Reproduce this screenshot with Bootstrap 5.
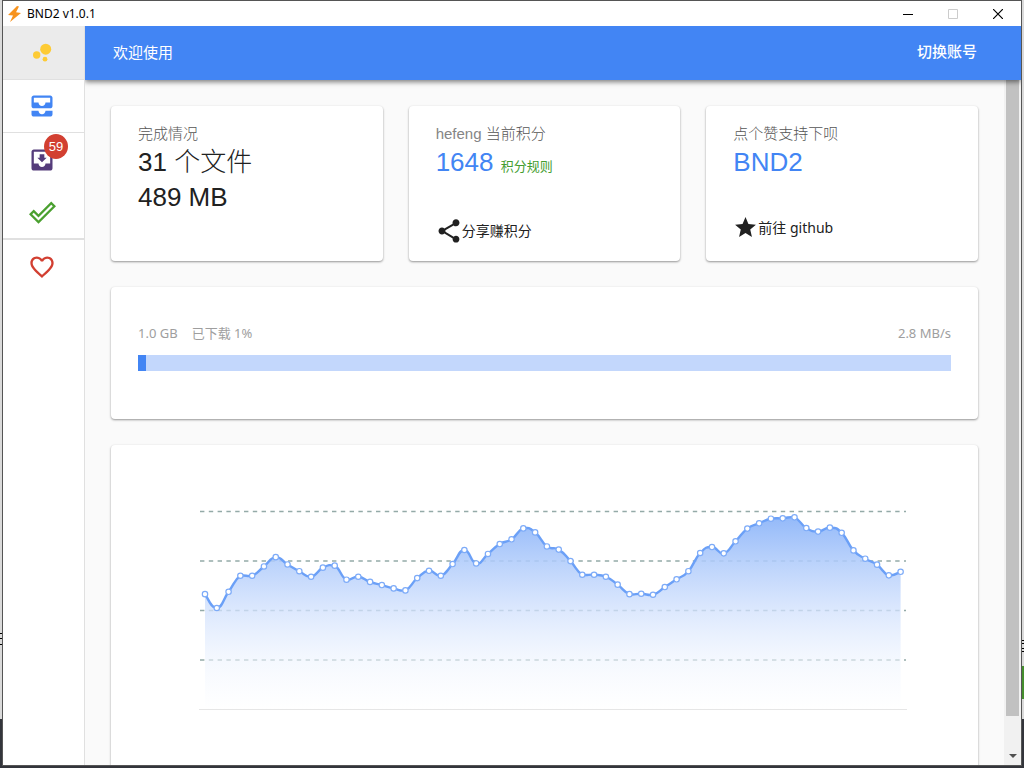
<!DOCTYPE html>
<html lang="zh-CN">
<head>
<meta charset="utf-8">
<meta name="viewport" content="width=device-width, initial-scale=1">
<title>BND2 v1.0.1</title>
<link rel="stylesheet" href="https://cdn.jsdelivr.net/npm/bootstrap@5.3.0/dist/css/bootstrap.min.css">
<style>
:root { --blue: #4285f4; --line: #e0e0e0; }
body {
  font-family: "Liberation Sans", "Noto Sans CJK SC", sans-serif;
  font-size: 15px; line-height: 21px; color: #212121;
  /* desktop behind the window: a sliver of other windows shows at both edges */
  background:
    linear-gradient(#448e2d, #448e2d) right 666px / 2px 33px no-repeat,
    linear-gradient(#000 1px, transparent 1px 5px, #000 5px 6px, transparent 6px 11px, #000 11px) left 633px / 2px 12px no-repeat,
    linear-gradient(#000 1px, transparent 1px 3px, #000 3px 4px, transparent 4px 8px, #000 8px 9px, transparent 9px 11px, #000 11px) right 640px / 2px 12px no-repeat,
    linear-gradient(#dadada 719px, #33353b 0);
}
svg { display: block; }
.app-window { height: calc(100vh - 2px); margin: 0 2px; border: 1px solid #555; background: #fff; }
.title-bar { height: 25px; padding-right: 1px; font: 12px/24px "Noto Sans", "Open Sans", sans-serif; color: #000; }
.title-bar .logo { margin: 0 5px 0 4px; }
.win-btn { width: 45px; height: 25px; }
.side-nav { width: 82px; border-right: 1px solid var(--line); }
.side-nav a { height: 53px; color: inherit; padding-right: 3px; }
.side-nav a.ruled { border-bottom: 1px solid var(--line); }
.side-nav a.group-end { height: 54px; border-bottom: 2px solid var(--line); }
.side-nav a.current { background: #ebebeb; height: 54px; }
.count { position: absolute; left: 41px; top: 1px; width: 24px; height: 25px; line-height: 25px; font-size: 13px; border-radius: 50%; background: #d23f31; color: #fff; text-align: center; }
.top-bar { height: 54px; padding: 0 44px 2px 28px; background: var(--blue); color: #fff; box-shadow: 0 2px 5px rgba(0,0,0,.5); z-index: 2; }
.top-bar button { font-size: 15px; font-weight: 500; color: #fff; }
.page-area { background: #fafafa; }
.scroll-view { padding: 26px; overflow-y: auto; scrollbar-width: none; }
.scroll-view::-webkit-scrollbar { display: none; }
.scroll-track { width: 17px; background: #f1f1f1; padding: 0 2px; }
.scroll-thumb { flex: 0 0 92.8%; background: #c1c1c1; }
.tiles { --bs-gutter-x: 26px; }
.panel { background: #fff; border-radius: 4px; padding: 0 27px; box-shadow: 0 1px 3px rgba(0,0,0,.16), 0 1px 2px rgba(0,0,0,.28); }
.tile { height: 155px; padding-top: 17px; }
.caption { color: #757575; }
.caption.cjk-thin { color: #555; }
.caption .latin { color: #858585; }
.figure-text { font-size: 26px; line-height: 35px; margin-top: 1px; }
.cjk-thin { font-weight: 300; }
.rules { font-size: 13px; color: #449d2f; }
.action { font: 14px/24px "Noto Sans", "Noto Sans CJK SC", sans-serif; color: #212121; }
.action.share { margin-bottom: 16px; }
.action.share svg { margin: 0 -1px 0 -1px; }
.action.star { margin-bottom: 21px; }
.text-blue { color: var(--blue); }
.download { margin-top: 26px; padding-top: 36px; padding-bottom: 48px; }
.stats { font: 13px/20px "Noto Sans", "Noto Sans CJK SC", sans-serif; color: #9e9e9e; margin-bottom: 12px; gap: 14px; }
.load-bar { height: 16px; border-radius: 0; background: #c3d7fc; }
.load-bar .progress-bar { background: var(--blue); }
.chart-card { margin-top: 26px; }
</style>
</head>
<body class="vh-100 overflow-hidden">
<div class="app-window d-flex flex-column">
  <header class="title-bar d-flex align-items-center flex-shrink-0">
    <svg class="logo" width="15" height="16" viewBox="0 0 15 16"><path fill="#f7931e" d="M10 0 1 9l5 .5L3 16l11-9-5-.8L12 .5z"/></svg>
    <span class="me-auto">BND2 v1.0.1</span>
    <button class="win-btn btn p-0 border-0 d-flex align-items-center justify-content-center" aria-label="最小化"><svg width="10" height="10"><path d="M0 5.500h10" stroke="#000"/></svg></button>
    <button class="win-btn btn p-0 border-0 d-flex align-items-center justify-content-center" aria-label="最大化"><svg width="10" height="10"><path d="M.5.5h9v9h-9z" fill="none" stroke="#ccc"/></svg></button>
    <button class="win-btn btn p-0 border-0 d-flex align-items-center justify-content-center" aria-label="关闭"><svg width="10" height="10"><path d="M0 0l10 10M10 0L0 10" stroke="#000" stroke-width="1.200"/></svg></button>
  </header>
  <div class="d-flex flex-grow-1 overflow-hidden">
    <nav class="side-nav flex-shrink-0">
      <a href="#home" class="current ruled d-flex align-items-center justify-content-center" aria-label="首页"><svg width="24" height="24" viewBox="0 0 24 24" fill="#fdcb35"><circle cx="6.700" cy="14" r="3.700"/><circle cx="15" cy="18.200" r="2.400"/><circle cx="15.700" cy="8.200" r="5.500"/></svg></a>
      <a href="#all" class="ruled d-flex align-items-center justify-content-center" aria-label="全部"><svg width="28" height="28" viewBox="0 0 24 24" fill="#4285f4"><path d="M19 3H5c-1.100 0-2 .9-2 2v7c0 1.100.9 2 2 2h14c1.100 0 2-.9 2-2V5c0-1.100-.9-2-2-2zm0 6h-4c0 1.620-1.380 3-3 3s-3-1.380-3-3H5V5h14v4zm-4 7h6v3c0 1.100-.9 2-2 2H5c-1.100 0-2-.9-2-2v-3h6c0 1.660 1.340 3 3 3s3-1.340 3-3z"/></svg></a>
      <a href="#downloading" class="position-relative d-flex align-items-center justify-content-center text-decoration-none" aria-label="下载中"><svg width="28" height="28" viewBox="0 0 24 24" fill="#553c7b"><path d="M19 3H5c-1.100 0-2 .9-2 2v14c0 1.100.9 2 2 2h14c1.100 0 2-.9 2-2V5c0-1.100-.9-2-2-2zm0 12h-4c0 1.660-1.350 3-3 3s-3-1.340-3-3H5V5h14v10zm-3-5h-2V7h-4v3H8l4 4 4-4z"/></svg><span class="count">59</span></a>
      <a href="#done" class="group-end d-flex align-items-center justify-content-center" aria-label="已完成"><svg width="27" height="27" viewBox="0 0 24 24" fill="#4aa02f"><path d="M19.780 2.200L24 6.420 8.440 22 0 13.550l4.220-4.220 4.220 4.220L19.780 2.200m0 2.800L8.440 16.360l-4.220-4.170-1.410 1.410 5.630 5.570L21.190 6.420 19.780 5z"/></svg></a>
      <a href="#favorites" class="d-flex align-items-center justify-content-center" aria-label="收藏"><svg width="28" height="28" viewBox="0 0 24 24" fill="#d23f31"><path d="M16.500 3c-1.740 0-3.410.81-4.500 2.090C10.910 3.810 9.240 3 7.500 3 4.420 3 2 5.420 2 8.500c0 3.780 3.400 6.860 8.550 11.540L12 21.350l1.450-1.320C18.600 15.360 22 12.280 22 8.500 22 5.420 19.580 3 16.500 3zm-4.400 15.550l-.1.100-.1-.1C7.140 14.240 4 11.390 4 8.500 4 6.500 5.500 5 7.500 5c1.540 0 3.040.99 3.570 2.360h1.870C13.460 5.990 14.960 5 16.500 5c2 0 3.500 1.500 3.500 3.500 0 2.890-3.140 5.740-7.900 10.050z"/></svg></a>
    </nav>
    <div class="page-area flex-grow-1 d-flex flex-column overflow-hidden">
      <div class="top-bar position-relative d-flex align-items-center justify-content-between flex-shrink-0">
        <span>欢迎使用</span>
        <button class="btn p-0 border-0">切换账号</button>
      </div>
      <div class="d-flex flex-grow-1 overflow-hidden">
        <main class="scroll-view flex-grow-1">
          <div class="row tiles">
            <div class="col-4"><section class="panel tile d-flex flex-column align-items-start">
              <div class="caption cjk-thin">完成情况</div>
              <div class="figure-text">31 <span class="cjk-thin">个文件</span><br>489 MB</div>
            </section></div>
            <div class="col-4"><section class="panel tile d-flex flex-column align-items-start">
              <div class="caption cjk-thin"><span class="latin">hefeng</span> 当前积分</div>
              <div class="figure-text text-blue">1648 <a href="#rules" class="rules text-decoration-none">积分规则</a></div>
              <button class="action share btn p-0 border-0 mt-auto d-flex align-items-center"><svg width="28" height="28" viewBox="0 0 24 24" fill="#212121"><path d="M18 16.080c-.76 0-1.440.3-1.960.77L8.910 12.700c.05-.23.09-.46.09-.7s-.04-.47-.09-.7l7.050-4.110c.54.5 1.250.81 2.040.81 1.660 0 3-1.340 3-3s-1.340-3-3-3-3 1.340-3 3c0 .24.04.47.09.7L8.040 9.810C7.500 9.310 6.790 9 6 9c-1.660 0-3 1.340-3 3s1.340 3 3 3c.79 0 1.500-.31 2.040-.81l7.120 4.160c-.05.21-.08.43-.08.65 0 1.610 1.310 2.920 2.920 2.920s2.920-1.310 2.920-2.920-1.310-2.920-2.920-2.920z"/></svg>分享赚积分</button>
            </section></div>
            <div class="col-4"><section class="panel tile d-flex flex-column align-items-start">
              <div class="caption cjk-thin">点个赞支持下呗</div>
              <div class="figure-text text-blue">BND2</div>
              <a href="#github" class="action star mt-auto d-flex align-items-center text-decoration-none"><svg width="25" height="25" viewBox="0 0 24 24" fill="#212121"><path d="M12 17.270L18.180 21l-1.640-7.030L22 9.240l-7.190-.61L12 2 9.190 8.630 2 9.240l5.460 4.730L5.820 21z"/></svg>前往 github</a>
            </section></div>
          </div>
          <section class="panel download">
            <div class="stats d-flex">
              <span>1.0 GB</span><span class="me-auto">已下载 1%</span><span>2.8 MB/s</span>
            </div>
            <div class="load-bar progress" role="progressbar" aria-label="已下载" aria-valuenow="1" aria-valuemin="0" aria-valuemax="100"><div class="progress-bar" style="width:1%"></div></div>
          </section>
          <section class="panel chart-card">
            <svg id="speed" width="100%" viewBox="0 0 813 330" role="img" aria-label="下载速度">
              <defs><linearGradient id="fade" gradientUnits="userSpaceOnUse" x1="0" y1="73" x2="0" y2="264"><stop offset="0" stop-color="#90b7f9" stop-opacity=".96"/><stop offset=".5" stop-color="#d3e2fd" stop-opacity=".75"/><stop offset=".75" stop-color="#eef4fe" stop-opacity=".6"/><stop offset="1" stop-color="#fff" stop-opacity=".5"/></linearGradient></defs>
            </svg>
          </section>
        </main>
        <div class="scroll-track d-flex flex-column align-items-center flex-shrink-0" aria-hidden="true">
          <div class="scroll-thumb w-100"></div>
          <svg class="mt-auto mb-1" width="8" height="10"><path d="M0 3h8L4 7z" fill="#505050"/></svg>
        </div>
      </div>
    </div>
  </div>
</div>
<script src="https://cdn.jsdelivr.net/npm/bootstrap@5.3.0/dist/js/bootstrap.bundle.min.js"></script>
<script>
// Speed samples, as percent of the axis maximum
const samples = [58,51,59.200,67.300,67.300,72,76.700,73,69.600,66.800,71.400,72.400,65.300,66.800,64.200,62.600,60.900,59.900,66.100,69.800,67.300,73.200,80.300,73.500,78.300,83.300,85.700,91.200,89.200,82.100,80.500,74.700,67.800,67.800,66.800,62.800,58,58.200,57.700,61.600,65.500,69.600,78.800,81.800,78.600,84.700,91.100,93.800,96.100,96.300,96.800,91.400,89.600,91.600,89,80.100,75.900,72.900,67.500,69.300];
const base = 264, height = 198, left = 67, step = 11.790;
const pts = samples.map((v, i) => [left + i * step, base - v * height / 100]);
let line = `M${pts[0]}`;
for (let i = 0; i < pts.length - 1; i++) {
  const a = pts[Math.max(i - 1, 0)], b = pts[i], c = pts[i + 1], d = pts[Math.min(i + 2, pts.length - 1)];
  const t = 0.250, lo = Math.min(b[1], c[1]) - 1, hi = Math.max(b[1], c[1]) + 1;
  const clamp = y => Math.max(lo, Math.min(hi, y));
  line += `C${b[0] + (c[0] - a[0]) * t},${clamp(b[1] + (c[1] - a[1]) * t)} ${c[0] - (d[0] - b[0]) * t},${clamp(c[1] - (d[1] - b[1]) * t)} ${c}`;
}
const end = pts[pts.length - 1][0];
let out = '';
for (let k = 1; k <= 4; k++) {
  const y = base + 0.500 - k * height / 4;
  out += `<path d="M62 ${y}H768" stroke="#94aaa8" stroke-width="1.600" stroke-dasharray="4.400 4.400"/>`;
}
out += `<path d="M61 264.500H769" stroke="#e6e6e6"/>`;
out += `<path d="${line}L${end},${base}L${left},${base}Z" fill="url(#fade)"/>`;
out += `<path d="${line}" fill="none" stroke="#6ba0f7" stroke-width="2.400"/>`;
out += pts.map(p => `<circle cx="${p[0]}" cy="${p[1]}" r="2.700" fill="#fff" stroke="#7dabf8" stroke-width="1.200"/>`).join('');
document.getElementById('speed').insertAdjacentHTML('beforeend', out);
</script>
</body>
</html>
